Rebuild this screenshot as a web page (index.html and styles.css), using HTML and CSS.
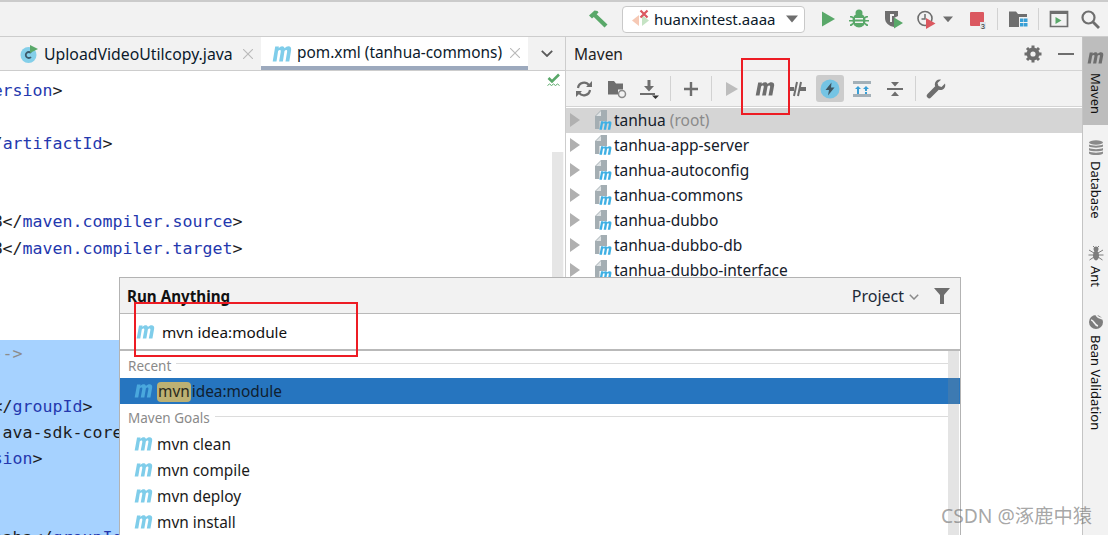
FILE: index.html
```html
<!DOCTYPE html>
<html lang="en">
<head>
<meta charset="utf-8">
<title>Run Anything - Maven</title>
<link rel="stylesheet" href="styles.css">
</head>
<body>
<svg class="defs" width="0" height="0" aria-hidden="true">
  <symbol id="m" viewBox="0 0 20 13" preserveAspectRatio="none">
    <path d="M3.2 0.5h3.7l-.25 1.3C7.7.8 8.9.2 10.100.2c1.300 0 2.200.6 2.500 1.700C13.700.8 15.100.2 16.300.2c2.200 0 3.200 1.300 2.800 3.300L17.300 12.500h-3.800l1.600-7.700c.2-1-.1-1.500-.9-1.500-.6 0-1.200.3-1.700.8L10.900 12.500H7.100l1.600-7.700c.2-1-.1-1.500-.9-1.500-.6 0-1.200.3-1.700.8L4.500 12.500H.7z"/>
  </symbol>
  <symbol id="mod" viewBox="0 0 18 21">
    <path fill="#a4aeb3" d="M1 7 7 1h6v11H5.500v8H1z"/>
    <path fill="#dfe3e5" d="M7 2v5H2z"/>
    <use href="#m" x="5" y="12" width="13" height="9" fill="#3fb0e4"/>
  </symbol>
  <symbol id="tri" viewBox="0 0 10 14"><path d="M0 0l10 7-10 7z"/></symbol>
</svg>

<div class="app">
  <header class="topbar">
    <svg class="ic w20 ml-auto" viewBox="0 0 20 20"><path fill="#59a869" d="M1 6.500 6.500 1.500l3 .5 1 1.500-1.800 1.800L19.500 15.500 16.500 18.500 5.800 8 4 9.500z"/></svg>
    <div class="config">
      <svg class="ic cfg" viewBox="0 0 20 20"><path fill="#f6c9b5" d="M8 6v11L1 11.500z"/><path fill="#c5e3c4" d="M11 6v11l7-5.500z"/><path fill="none" stroke="#db5860" stroke-width="2.200" d="M9.500 1.500l7 7m0-7-7 7"/></svg>
      <span class="config-name">huanxintest.aaaa</span>
      <svg class="ic caret" viewBox="0 0 12 8"><path fill="#6e6e6e" d="M0 .5h12L6 7.500z"/></svg>
    </div>
    <svg class="ic w20 ml-13" viewBox="0 0 20 20"><path fill="#59a869" d="M4 2.500 17 10 4 17.500z"/></svg>
    <svg class="ic w20 ml-11" viewBox="0 0 20 20"><g fill="#59a869"><ellipse cx="10" cy="11.500" rx="6.500" ry="7"/><circle cx="10" cy="4" r="3.500"/><path d="M1 7h2l3 2v1.500L2 8.500H1zM19 7h-2l-3 2v1.500l4-2h1zM0 11h4v1.500H0zM16 11h4v1.500h-4zM1 17h1.500l3-2.500-1-1L1 15.500zM19 17h-1.500l-3-2.500 1-1 3.500 2z"/></g><path fill="#f2f2f2" d="M6 9h8v1.500H6zM6 12.500h8V14H6z"/></svg>
    <svg class="ic w20 ml-15" viewBox="0 0 20 20"><path fill="#6e6e6e" d="M1 2h13v5l-4 2v9C5 17 1 14 1 9z"/><path fill="#f2f2f2" d="M6 5h4v2H8v6H6z"/><path fill="#59a869" d="M10 8.500l9 5.500-9 5.500z"/></svg>
    <svg class="ic w20 ml-12" viewBox="0 0 20 20"><circle cx="9" cy="9.500" r="7" fill="none" stroke="#6e6e6e" stroke-width="1.600"/><path fill="none" stroke="#6e6e6e" stroke-width="1.500" d="M9 5v5H5.500"/><path fill="#db5860" d="M10 9l9.500 5.500L10 20z"/></svg>
    <svg class="ic w10 ml-7" viewBox="0 0 12 8"><path fill="#6e6e6e" d="M0 .5h12L6 7.500z"/></svg>
    <svg class="ic w20 ml-14" viewBox="0 0 20 20"><rect x="3" y="3" width="14" height="14" rx="1" fill="#db5860"/><path fill="#dfe4ea" d="M13 13h6v7h-6z"/><text x="14" y="19.500" class="badge">3</text></svg>
    <span class="vsep ml-10"></span>
    <svg class="ic w20 ml-10" viewBox="0 0 20 20"><path fill="#6e6e6e" d="M1 2.500h7l2 2.500h9v3h-8v10H1z"/><path fill="#389fd6" d="M12 9.500h3.500V13H12zM16 9.500h3.500V13H16zM12 14h3.500v3.500H12zM16 14h3.500v3.500H16z"/></svg>
    <span class="vsep ml-10"></span>
    <svg class="ic w20 ml-10" viewBox="0 0 20 20"><path fill="none" stroke="#6e6e6e" stroke-width="1.700" d="M1.500 2.500h17v15h-17z"/><path fill="#6e6e6e" d="M1.500 2h17v3h-17z"/><path fill="#59a869" d="M6.500 8l6 3.500-6 3.500z"/></svg>
    <svg class="ic w20 ml-11" viewBox="0 0 20 20"><circle cx="8.500" cy="8.500" r="6" fill="none" stroke="#6e6e6e" stroke-width="2.200"/><path stroke="#6e6e6e" stroke-width="2.800" d="M13 13l6 6"/></svg>
  </header>

  <main class="workspace">
    <section class="editor">
      <div class="tabs">
        <div class="tab tab-first">
          <svg class="ic w18" viewBox="0 0 18 18"><circle cx="8.500" cy="10" r="8" fill="#84cfe9"/><path fill="none" stroke="#3c5a6b" stroke-width="1.800" d="M11 8a3 3 0 1 0 0 4"/><path fill="#59a869" d="M10 0l8 4-8 4z"/></svg>
          <span class="tab-name">UploadVideoUtilcopy.java</span>
          <svg class="close" viewBox="0 0 10 10"><path d="M0 0l10 10M10 0 0 10"/></svg>
        </div>
        <div class="tab tab-active">
          <svg class="mi tab-m"><use href="#m"/></svg>
          <span class="tab-name">pom.xml (tanhua-commons)</span>
          <svg class="close" viewBox="0 0 10 10"><path d="M0 0l10 10M10 0 0 10"/></svg>
        </div>
        <svg class="chev" viewBox="0 0 12 7"><path d="M.8.800 6 6l5.200-5.200"/></svg>
      </div>
      <div class="code-pane">
        <svg class="inspect" viewBox="0 0 15 15"><path fill="none" stroke="#59a869" stroke-width="2.600" d="M1.500 5l3.500 3.500 7-7"/><path fill="none" stroke="#59a869" stroke-width="1" d="M.5 12.500l2-1.500 2 1.500 2-1.500 2 1.500 2-1.500 2 1.500"/></svg>
        <div class="code-scroll"></div>
        <div class="code">
          <div class="line">                                     &lt;<span class="n">version</span>&gt;</div>
          <div class="line"></div>
          <div class="line">                                      &lt;/<span class="n">artifactId</span>&gt;</div>
          <div class="line"></div>
          <div class="line"></div>
          <div class="line">              &lt;<span class="n">maven.compiler.source</span>&gt;1.8&lt;/<span class="n">maven.compiler.source</span>&gt;</div>
          <div class="line">              &lt;<span class="n">maven.compiler.target</span>&gt;1.8&lt;/<span class="n">maven.compiler.target</span>&gt;</div>
          <div class="line"></div>
          <div class="line"></div>
          <div class="line"></div>
          <div class="selected">
            <div class="line">                                       <span class="cm">--&gt;</span></div>
            <div class="line"></div>
            <div class="line">                             com.aliyun&lt;/<span class="n">groupId</span>&gt;</div>
            <div class="line">                                       java-sdk-core&lt;/<span class="n">artifactId</span>&gt;</div>
            <div class="line">                                  &lt;/<span class="n">version</span>&gt;</div>
            <div class="line"></div>
            <div class="line"></div>
            <div class="line">                                com.alibaba&lt;/<span class="n">groupId</span>&gt;</div>
          </div>
        </div>
      </div>
    </section>

    <section class="maven">
      <div class="maven-head">
        <span class="maven-title">Maven</span>
        <svg class="ic w18 gear" viewBox="0 0 18 18"><circle cx="9" cy="9" r="6.500" fill="#6e6e6e"/><path stroke="#6e6e6e" stroke-width="3" d="M9 .5v17M.5 9h17M3 3l12 12M15 3 3 15"/><circle cx="9" cy="9" r="2.600" fill="#f2f2f2"/></svg>
        <span class="minus"></span>
      </div>
      <div class="maven-tools">
        <span class="tb"><svg class="ic w18" viewBox="0 0 18 18"><path fill="none" stroke="#6e6e6e" stroke-width="2.200" d="M3 8a6 6 0 0 1 11-2.500M15 10a6 6 0 0 1-11 2.500"/><path fill="#6e6e6e" d="M11 7h6V1zM7 11H1v6z"/></svg></span>
        <span class="tb"><svg class="ic w20" viewBox="0 0 20 20"><path fill="#6e6e6e" d="M1 2h6l2 2.500h7v6h-5v5H1z"/><circle cx="15" cy="15" r="3.500" fill="none" stroke="#8a8a8a" stroke-width="1.500"/></svg></span>
        <span class="tb"><svg class="ic w20" viewBox="0 0 20 20"><path fill="#6e6e6e" d="M8.500 1h3v6h3.500L10 12.500 5 7h3.500zM1 14h15v2H1z"/><path fill="#333" d="M13 16.500h7L16.500 20z"/></svg></span>
        <span class="tsep"></span>
        <span class="tb"><svg class="ic w16" viewBox="0 0 16 16"><path fill="#6e6e6e" d="M6.800 1h2.400v5.800H15v2.400H9.200V15H6.800V9.200H1V6.800h5.800z"/></svg></span>
        <span class="tsep"></span>
        <span class="tb"><svg class="ic w16" viewBox="0 0 16 16"><path fill="#bdbdbd" d="M2 1l12 7-12 7z"/></svg></span>
        <span class="tb"><svg class="mi tool-m"><use href="#m"/></svg></span>
        <span class="tb"><svg class="ic w18" viewBox="0 0 18 18"><path fill="#6e6e6e" d="M0 7h6v4H0zM12 7h6v4h-6z"/><path stroke="#6e6e6e" stroke-width="2" d="M6 16 9 2M10 16l3-14"/></svg></span>
        <span class="tb tb-on"><svg class="ic w20" viewBox="0 0 20 20"><circle cx="10" cy="10" r="9.500" fill="#75c4e4"/><path fill="#3f5560" d="M11.500 3.500 5.500 11h3.500L8 16.500l6.500-8H11z"/></svg></span>
        <span class="tb"><svg class="ic w18" viewBox="0 0 18 18"><path fill="#a3b0b8" d="M0 1h18v3H0zM0 14h18v3H0z"/><path fill="#389fd6" d="M5 6l3 3H6v5H4V9H2zM13 6l3 3h-2v2h-2V9h-2z"/><path fill="#389fd6" d="M12 12h2v2h-2z"/></svg></span>
        <span class="tb"><svg class="ic w16" viewBox="0 0 16 16"><path fill="#6e6e6e" d="M0 7h16v2H0zM4 1h8L8 5.500zM4 15h8l-4-4.500z"/></svg></span>
        <span class="tsep"></span>
        <span class="tb"><svg class="ic w20" viewBox="0 0 20 20"><path fill="#6e6e6e" d="M19 4.500 15.500 8 12.500 7l-1-3L15 .8C12 0 9 2 8.800 5.200c0 .8.100 1.400.4 2L1.500 15a2.400 2.400 0 0 0 3.500 3.500l7.800-7.700c3.800 1.300 7.500-2 6.200-6.300z"/></svg></span>
      </div>
      <ul class="tree">
        <li class="row row-on"><svg class="arrow"><use href="#tri"/></svg><svg class="mod"><use href="#mod"/></svg><span>tanhua <span class="root">(root)</span></span></li>
        <li class="row"><svg class="arrow"><use href="#tri"/></svg><svg class="mod"><use href="#mod"/></svg><span>tanhua-app-server</span></li>
        <li class="row"><svg class="arrow"><use href="#tri"/></svg><svg class="mod"><use href="#mod"/></svg><span>tanhua-autoconfig</span></li>
        <li class="row"><svg class="arrow"><use href="#tri"/></svg><svg class="mod"><use href="#mod"/></svg><span>tanhua-commons</span></li>
        <li class="row"><svg class="arrow"><use href="#tri"/></svg><svg class="mod"><use href="#mod"/></svg><span>tanhua-dubbo</span></li>
        <li class="row"><svg class="arrow"><use href="#tri"/></svg><svg class="mod"><use href="#mod"/></svg><span>tanhua-dubbo-db</span></li>
        <li class="row"><svg class="arrow"><use href="#tri"/></svg><svg class="mod"><use href="#mod"/></svg><span>tanhua-dubbo-interface</span></li>
      </ul>
    </section>

    <aside class="strip">
      <div class="strip-item strip-on"><svg class="mi strip-m"><use href="#m"/></svg><span class="strip-label">Maven</span></div>
      <div class="strip-item"><svg class="ic w16" viewBox="0 0 16 16"><g fill="#8a8a8a"><ellipse cx="8" cy="2.500" rx="7" ry="2.200"/><path d="M1 4.500c2 1.500 12 1.500 14 0v2c-2 1.500-12 1.500-14 0zM1 8c2 1.500 12 1.500 14 0v2.200c-2 1.500-12 1.500-14 0zM1 11.500c2 1.500 12 1.500 14 0v2c-2 2-12 2-14 0z"/></g></svg><span class="strip-label">Database</span></div>
      <div class="strip-item"><svg class="ic w16" viewBox="0 0 16 16"><g fill="#7d7d7d"><ellipse cx="8" cy="10.500" rx="3" ry="5"/><circle cx="8" cy="4" r="2.500"/><path stroke="#7d7d7d" d="M5 1l2 2M11 1 9 3M1 5l5 3M15 5l-5 3M.5 10h5M15.500 10h-5M1.500 15 6 12M14.500 15 10 12"/></g></svg><span class="strip-label">Ant</span></div>
      <div class="strip-item"><svg class="ic w16" viewBox="0 0 16 16"><circle cx="8" cy="8" r="7" fill="#7d7d7d"/><path fill="none" stroke="#f2f2f2" stroke-width="1.600" d="M3 6c3 0 3 5 7 6M8 1c2 3 4 3 7 4"/></svg><span class="strip-label">Bean Validation</span></div>
    </aside>
  </main>

  <section class="popup">
    <div class="popup-head">
      <strong class="popup-title">Run Anything</strong>
      <span class="scope">Project</span>
      <svg class="scope-chev" viewBox="0 0 10 6"><path d="M.8.800 5 5l4.200-4.200"/></svg>
      <svg class="ic w18 funnel" viewBox="0 0 18 18"><path fill="#6e6e6e" d="M1 1h16l-6 7v9H7V8z"/></svg>
    </div>
    <div class="popup-input">
      <svg class="mi run-m"><use href="#m"/></svg>
      <span>mvn idea:module</span>
    </div>
    <div class="popup-list">
      <div class="group"><span>Recent</span><i></i></div>
      <div class="item item-on"><svg class="mi item-m"><use href="#m"/></svg><span><span class="hit">mvn</span> idea:module</span></div>
      <div class="group group-goals"><span>Maven Goals</span><i></i></div>
      <div class="item"><svg class="mi item-m"><use href="#m"/></svg><span>mvn clean</span></div>
      <div class="item"><svg class="mi item-m"><use href="#m"/></svg><span>mvn compile</span></div>
      <div class="item"><svg class="mi item-m"><use href="#m"/></svg><span>mvn deploy</span></div>
      <div class="item"><svg class="mi item-m"><use href="#m"/></svg><span>mvn install</span></div>
      <div class="list-scroll"></div>
    </div>
  </section>

  <div class="mark mark-m"></div>
  <div class="mark mark-input"></div>
  <div class="watermark">CSDN @涿鹿中猿</div>
</div>
</body>
</html>
```

FILE: styles.css
```css
* { box-sizing: border-box; }
html, body { margin: 0; height: 100%; }
body { overflow: hidden; background: #fff; font-family: "Noto Sans", "Noto Sans CJK SC", sans-serif; color: #111; }
.defs { position: absolute; }
.app { position: relative; width: 1108px; height: 535px; overflow: hidden; display: flex; flex-direction: column; }

.ic { display: block; flex: none; height: auto; }
.w20 { width: 20px; } .w18 { width: 18px; } .w16 { width: 16px; } .w10 { width: 10px; }
.ml-auto { margin-left: auto; }
.ml-7 { margin-left: 7px; } .ml-10 { margin-left: 10px; } .ml-11 { margin-left: 11px; }
.ml-12 { margin-left: 12px; } .ml-13 { margin-left: 13px; } .ml-14 { margin-left: 14px; } .ml-15 { margin-left: 15px; }
.mi { display: block; flex: none; fill: #7fcdea; }

.topbar { height: 37px; flex: none; display: flex; align-items: center; padding: 0 8px 0 0; background: #f2f2f2; border-top: 2px solid #cbcbcb; border-bottom: 1px solid #cdcdcd; }
.config { margin-left: 14px; width: 183px; height: 27px; display: flex; align-items: center; background: #fff; border: 1px solid #c9c9c9; border-radius: 4px; padding-left: 8px; }
.cfg { width: 20px; }
.config-name { margin-left: 3px; font-size: 15px; line-height: 20px; color: #0b1a2b; white-space: nowrap; }
.caret { width: 12px; margin-left: auto; margin-right: 6px; }
.vsep { width: 1px; height: 22px; background: #d2d2d2; flex: none; }
.badge { font: 7px "Liberation Sans", sans-serif; fill: #222; }

.workspace { flex: 1; min-height: 0; display: flex; }
.editor { width: 565px; flex: none; display: flex; flex-direction: column; }
.tabs { height: 34px; flex: none; display: flex; align-items: stretch; background: #f2f2f2; border-bottom: 1px solid #cdcdcd; }
.tab { display: flex; align-items: center; font-size: 15.400px; white-space: nowrap; color: #0b1a2b; }
.tab-first { width: 261px; padding-left: 20px; gap: 6px; }
.tab-first .tab-name { font-size: 15.800px; }
.tab-active { width: 267px; padding: 3px 0 0 11px; gap: 5px; background: #fff; border-bottom: 4px solid #9ca9bd; }
.tab-name { line-height: 20px; }
.tab-m { width: 20px; height: 16px; margin-top: 1px; }
.close { width: 10px; height: 10px; flex: none; margin-left: auto; margin-right: 8px; fill: none; stroke: #b9b9b9; stroke-width: 1.100; }
.chev { width: 12px; height: 7px; margin: 13px 0 0 13px; fill: none; stroke: #5a5a5a; stroke-width: 1.800; }

.code-pane { flex: 1; min-height: 0; position: relative; overflow: hidden; padding-top: 7px; }
.code { margin-left: -397px; width: 964px; font: 16.600px/26.300px "DejaVu Sans Mono", "Liberation Mono", monospace; color: #1d1d1d; }
.line { height: 26.300px; white-space: pre; }
.n { color: #2438ae; }
.cm { color: #8c8c8c; }
.selected { background: #a6d2ff; margin-top: -1px; padding-top: 1px; }
.inspect { position: absolute; top: 2px; right: 3px; width: 15px; height: 15px; }
.code-scroll { position: absolute; top: 81px; bottom: 0; right: 1px; width: 12px; background: #e6e6e6; border-right: 1px solid #f7f7f7; }

.maven { width: 517px; flex: none; display: flex; flex-direction: column; border-left: 1px solid #cdcdcd; }
.maven-head { height: 34px; flex: none; display: flex; align-items: center; padding: 0 8px 0 8px; background: #f2f2f2; border-bottom: 1px solid #d4d4d4; }
.maven-title { font-size: 15.500px; color: #222; }
.gear { margin-left: auto; }
.minus { width: 16px; height: 2px; background: #6e6e6e; margin-left: 16px; }
.maven-tools { height: 36px; flex: none; display: flex; align-items: center; padding-left: 2px; background: #f2f2f2; border-bottom: 1px solid #d4d4d4; }
.tb { width: 32.500px; height: 27px; flex: none; display: flex; align-items: center; justify-content: center; }
.tb-on { width: 28px; margin: 0 2.250px; background: #cccccc; border-radius: 3px; }
.tsep { width: 1px; height: 25px; margin: 0 4px; background: #d2d2d2; flex: none; }
.tool-m { width: 20px; height: 14px; fill: #6e6e6e; }

.tree { list-style: none; margin: 1px 0 0; padding: 0; flex: 1; }
.row { height: 25px; display: flex; align-items: center; padding: 0 0 2px 4px; font-size: 15.500px; color: #15202b; white-space: nowrap; }
.row-on { background: #d5d5d5; }
.arrow { width: 10px; height: 14px; flex: none; fill: #b0b0b0; }
.mod { width: 18px; height: 21px; flex: none; margin-left: 14px; margin-right: 2px; }
.root { color: #8a8a8a; }

.strip { flex: 1; display: flex; flex-direction: column; background: #f2f2f2; border-left: 1px solid #c4c4c4; }
.strip-item { display: flex; flex-direction: column; align-items: center; gap: 5px; padding: 15px 0 11.500px; }
.strip-on { height: 88px; background: #bdbdbd; padding: 15px 0 0; gap: 9px; }
.strip-m { width: 17px; height: 12px; fill: #6e6e6e; }
.strip-label { writing-mode: vertical-rl; font-size: 13px; line-height: 16px; color: #111; white-space: nowrap; }

.popup { position: absolute; left: 119px; top: 277px; width: 842px; height: 270px; background: #fff; border: 1px solid #b3b3b3; display: flex; flex-direction: column; }
.popup-head { height: 36px; flex: none; display: flex; align-items: center; padding: 0 9px 0 7px; background: #f2f2f2; border-bottom: 1px solid #b9b9b9; }
.popup-title { font-size: 15.200px; font-weight: 700; color: #111; }
.scope { margin-left: auto; font-size: 16px; color: #1d2a38; }
.scope-chev { width: 10px; height: 6px; margin: 2px 14px 0 5px; fill: none; stroke: #8a8a8a; stroke-width: 1.500; }
.popup-input { height: 37px; flex: none; display: flex; align-items: center; padding-left: 16px; gap: 7px; font-size: 15.300px; border-bottom: 2px solid #b9b9b9; }
.run-m { width: 19px; height: 14px; }
.popup-list { position: relative; flex: 1; }
.group { height: 27px; display: flex; align-items: center; gap: 5px; padding: 3px 12px 0 8px; font-size: 13.500px; color: #8a8a8a; }
.group i { flex: 1; height: 1px; margin-top: -6px; background: #dcdcdc; }
.group-goals { padding-top: 1px; }
.group-goals i { margin-top: -4px; }
.item { height: 26px; display: flex; align-items: center; padding-left: 14px; gap: 4px; font-size: 15.400px; color: #1a1a1a; white-space: nowrap; }
.item-m { width: 19px; height: 14px; }
.item-on { background: #2675bf; color: #fff; }
.item-on .mi { fill: #4aa8dd; }
.item-on > span { color: #10202f; }
.hit { display: inline-block; background: #bdb173; color: #2b2a1c; border-radius: 4px; padding: 0 1px; margin-right: -3px; line-height: 20px; }
.list-scroll { position: absolute; top: 0; bottom: 0; right: 1px; width: 11px; background: rgba(140, 140, 140, .23); }

.mark { position: absolute; border: 2px solid #ed1c24; }
.mark-m { left: 741px; top: 58px; width: 49px; height: 57px; }
.mark-input { left: 134px; top: 302px; width: 224px; height: 55px; }
.watermark { position: absolute; right: 16px; top: 502px; font-size: 19.300px; line-height: 28px; color: rgba(110, 110, 110, .62); white-space: nowrap; }
```
